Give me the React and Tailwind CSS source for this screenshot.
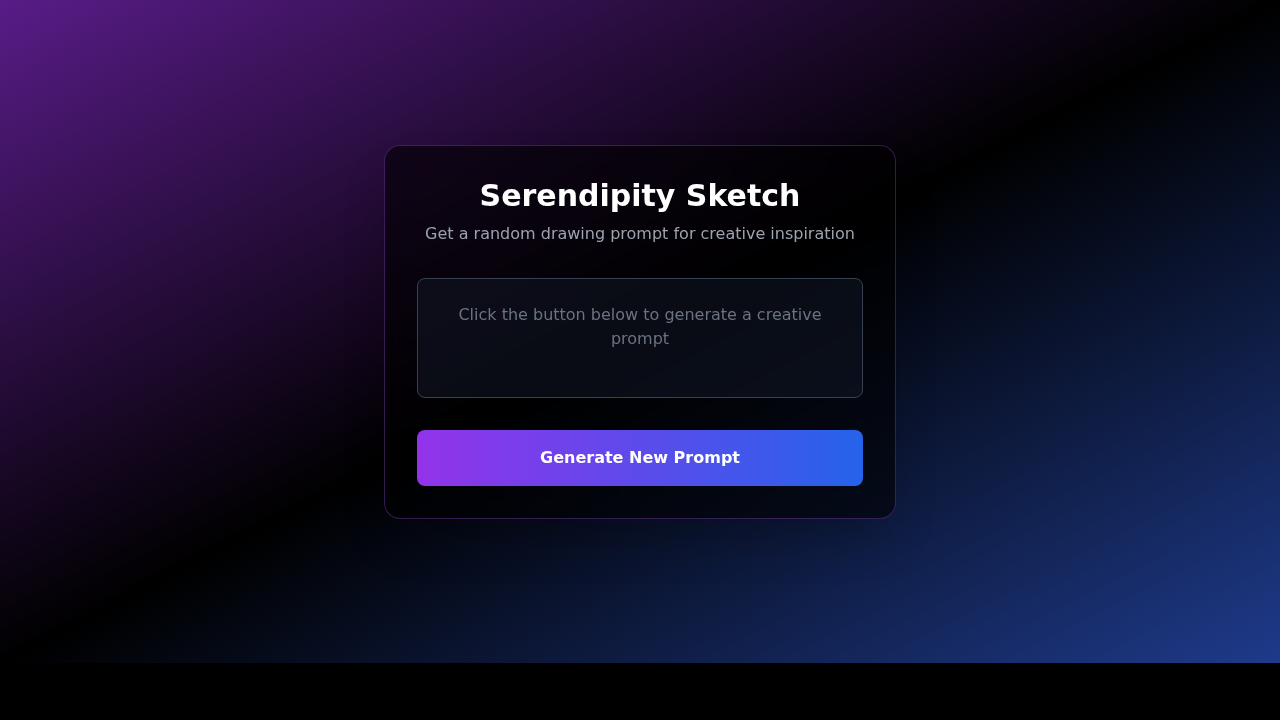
import { useState } from 'react';

const PROMPTS = [
  'A lighthouse made of stacked teacups',
  'A fox reading a map under a mushroom umbrella',
  'A city skyline drawn inside a raindrop',
  'An astronaut tending a tiny garden on the moon',
];

export default function App() {
  const [prompt, setPrompt] = useState(null);

  const generate = () => {
    setPrompt(PROMPTS[Math.floor(Math.random() * PROMPTS.length)]);
  };

  return (
    <div className="bg-black min-h-screen" style={{ fontFamily: '"DejaVu Sans", sans-serif' }}>
      <div className="h-[663px] bg-linear-to-br/srgb from-[#581c87] via-black to-[#1e3a8a] flex items-center justify-center px-4">
        <div className="w-full max-w-lg bg-black/60 backdrop-blur-lg border border-[#a855f7]/30 rounded-2xl p-8 shadow-2xl">
          {/* header */}
          <h1 className="text-3xl font-bold text-white text-center">Serendipity Sketch</h1>
          <p className="mt-2 text-base text-[#9ca3af] text-center">
            Get a random drawing prompt for creative inspiration
          </p>

          {/* prompt box */}
          <div className="mt-8 min-h-[120px] rounded-lg border border-[#374151] bg-[#111827]/50 p-6">
            <p className={prompt ? 'text-center text-white text-lg' : 'text-center text-[#6b7280] text-base'}>
              {prompt ?? 'Click the button below to generate a creative prompt'}
            </p>
          </div>

          <button
            onClick={generate}
            className="mt-8 w-full rounded-lg bg-linear-to-r/srgb from-[#9333ea] to-[#2563eb] py-4 text-base font-semibold text-white cursor-pointer"
          >
            Generate New Prompt
          </button>
        </div>
      </div>
    </div>
  );
}
